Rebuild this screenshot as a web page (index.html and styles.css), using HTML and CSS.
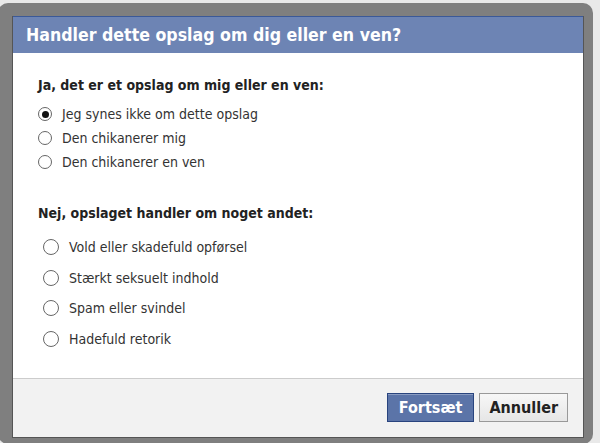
FILE: index.html
```html
<!DOCTYPE html>
<html lang="da">

<head>
    <meta charset="UTF-8">
    <title>Rapportér opslag</title>
    <link rel="stylesheet" href="styles.css">
</head>

<body>
    <div class="overlay">
        <div class="dialog">
            <h2 class="dialog-title">Handler dette opslag om dig eller en ven?</h2>

            <div class="dialog-body">
                <h4 class="group-title">Ja, det er et opslag om mig eller en ven:</h4>
                <ul class="choices">
                    <li><label><input type="radio" name="reason" value="dislike" checked> Jeg synes ikke om dette opslag</label></li>
                    <li><label><input type="radio" name="reason" value="harass-me"> Den chikanerer mig</label></li>
                    <li><label><input type="radio" name="reason" value="harass-friend"> Den chikanerer en ven</label></li>
                </ul>

                <h4 class="group-title second">Nej, opslaget handler om noget andet:</h4>
                <ul class="choices wide">
                    <li><label><input type="radio" name="reason" value="violence"> Vold eller skadefuld opførsel</label></li>
                    <li><label><input type="radio" name="reason" value="sexual"> Stærkt seksuelt indhold</label></li>
                    <li><label><input type="radio" name="reason" value="spam"> Spam eller svindel</label></li>
                    <li><label><input type="radio" name="reason" value="hate"> Hadefuld retorik</label></li>
                </ul>
            </div>

            <div class="dialog-footer">
                <button class="btn btn-confirm">Fortsæt</button>
                <button class="btn btn-cancel">Annuller</button>
            </div>
        </div>
    </div>
</body>

</html>
```

FILE: styles.css
```css
body {
    margin: 0;
    padding: 0;
    height: 443px;
    overflow: hidden;
    background-color: #e9e9e9;
    font-family: "DejaVu Sans Condensed", "DejaVu Sans", sans-serif;
    color: #333;
}

/* grey frame around the popup */
.overlay {
    margin: 3px 7px 0 -2px;
    padding: 13px 9px 6px 14px;
    background-color: #7f7f7f;
    border-radius: 10px;
}

.dialog {
    background-color: #fff;
    border: 1px solid #555;
    border-top: none;
}

.dialog-title {
    margin: 0;
    height: 36px;
    line-height: 36px;
    padding-left: 13px;
    background-color: #6d84b4;
    border-top: 1px solid #3b5998;
    color: #fff;
    font-size: 17.6px;
    font-weight: bold;
}

.dialog-body {
    padding: 24px 0 24px 25px;
}

.group-title {
    margin: 0;
    font-size: 14px;
    line-height: 16px;
    font-weight: bold;
    color: #222;
}

.group-title.second {
    margin-top: 31px;
}

.choices {
    list-style: none;
    margin: 9px 0 0 0;
    padding: 0;
}

.choices li {
    height: 24px;
    display: flex;
    align-items: center;
    font-size: 14px;
}

.choices label {
    display: flex;
    align-items: center;
    gap: 10px;
}

.choices input {
    appearance: none;
    margin: 0;
    width: 14px;
    height: 14px;
    border: 1.5px solid #666;
    border-radius: 50%;
    background-color: #fff;
    box-sizing: border-box;
    display: grid;
    place-items: center;
}

.choices input:checked::before {
    content: "";
    width: 7px;
    height: 7px;
    border-radius: 50%;
    background-color: #111;
}

.choices.wide {
    margin-top: 11px;
    padding-left: 5px;
}

.choices.wide li {
    height: 30.5px;
}

.choices.wide input {
    width: 16px;
    height: 16px;
}

.dialog-footer {
    display: flex;
    justify-content: flex-end;
    gap: 5px;
    padding: 14px 15px 15px 0;
    background-color: #f2f2f2;
    border-top: 1px solid #ccc;
}

.btn {
    height: 29px;
    padding: 0 8px;
    font-family: inherit;
    font-size: 16px;
    font-weight: bold;
    cursor: pointer;
}

.btn-confirm {
    padding: 0 11px;
    background-color: #5b74a8;
    border: 1px solid #29447e;
    box-shadow: inset 0 1px 0 #8a9cc2;
    color: #fff;
}

.btn-cancel {
    padding: 0 9px;
    background: linear-gradient(#f7f7f7, #e6e6e6);
    border: 1px solid #999;
    color: #222;
}
```
